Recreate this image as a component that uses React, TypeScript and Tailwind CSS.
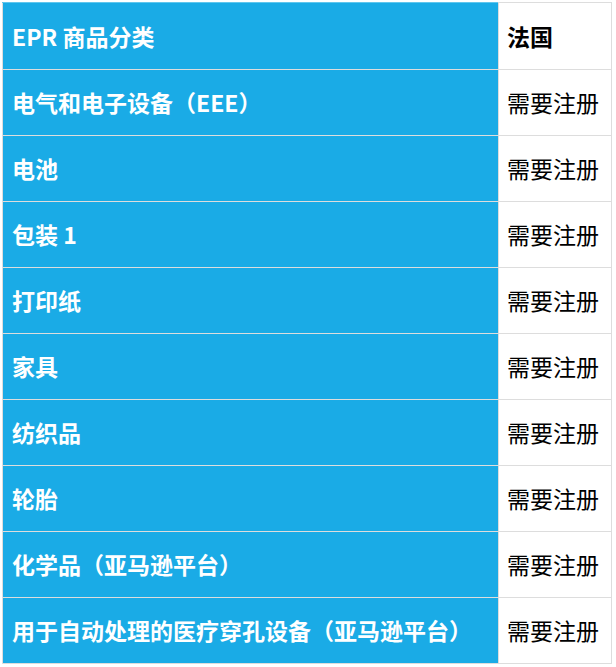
const rows = [
  '电气和电子设备（EEE）',
  '电池',
  '包装 1',
  '打印纸',
  '家具',
  '纺织品',
  '轮胎',
  '化学品（亚马逊平台）',
  '用于自动处理的医疗穿孔设备（亚马逊平台）',
];

export default function App() {
  return (
    <div
      className="bg-white pl-[2px] pt-[2px]"
      style={{ fontFamily: '"Noto Sans CJK SC", "Noto Sans", sans-serif' }}
    >
      <table className="w-[610px] table-fixed border-collapse text-[23px] leading-none">
        <colgroup>
          <col className="w-[496px]" />
          <col />
        </colgroup>
        <tbody>
          <tr className="h-[67px]">
            <td className="border border-[#ddd] border-t-[#5fc6ee] bg-[#1aabe6] pl-[9px] align-middle font-bold text-white">
              EPR 商品分类
            </td>
            <td className="border border-[#ddd] pl-[8px] align-middle font-bold text-black">
              法国
            </td>
          </tr>
          {rows.map((r) => (
            <tr key={r} className="h-[66px]">
              <td className="border border-[#ddd] bg-[#1aabe6] pl-[9px] align-middle font-bold whitespace-nowrap text-white">
                {r}
              </td>
              <td className="border border-[#ddd] pl-[8px] align-middle whitespace-nowrap text-black">
                需要注册
              </td>
            </tr>
          ))}
        </tbody>
      </table>
    </div>
  );
}
